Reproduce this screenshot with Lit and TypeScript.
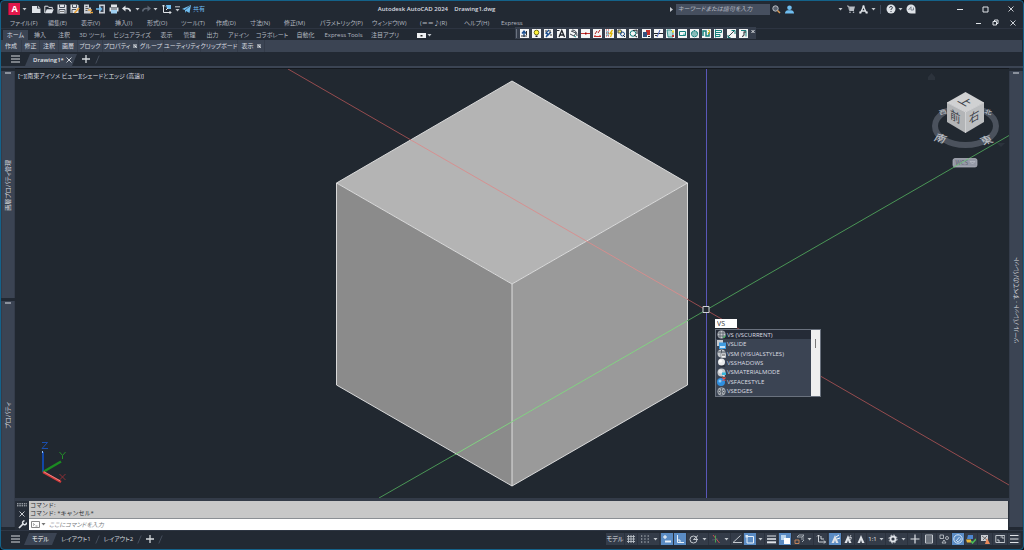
import { LitElement, html, svg, css } from "lit";
import { customElement, state } from "lit/decorators.js";

const base = css`
  * { box-sizing: border-box; }
  button, input, select {
    font: inherit; color: inherit; background: none; border: 0; padding: 0; margin: 0;
    outline: none; border-radius: 0;
  }
  button { display: flex; align-items: center; justify-content: center; white-space: nowrap; }
  svg { display: block; flex: none; }
  a { color: inherit; text-decoration: none; }
`;

const ic = (w: number, h: number, body: unknown) =>
  html`<svg width=${w} height=${h} viewBox="0 0 ${w} ${h}" fill="none" stroke-width="1" aria-hidden="true">${body}</svg>`;
const W = "#dfe3e8";
const B = "#6fbdf0";
const caret = ic(5, 3, svg`<path d="M.5 0h4L2.5 2.5z" fill="#c3c8ce"/>`);
const burger = ic(9, 8, svg`<path d="M0 1h9M0 4h9M0 7h9" stroke="#d6dade"/>`);
const plus = ic(8, 8, svg`<path d="M4 0v8M0 4h8" stroke="#d6dade" stroke-width="1.3"/>`);
const cross = ic(6, 6, svg`<path d="M.5.5l5 5M5.5.5l-5 5" stroke="#c9cdd3"/>`);
const slash = ic(5, 9, svg`<path d="M.8 8.500L4.200.5" stroke="#454e5c"/>`);
const grip = ic(6, 2, svg`<path d="M0 1h6" stroke="#8a919c" stroke-width="2"/>`);
const launcher = ic(4, 4, svg`<path d="M0 0h4v4H0z" fill="#8d949e"/><path d="M1.500 1.500l2 2" stroke="#e5e8eb"/>`);

const quick: Record<string, unknown> = {
  新規: ic(10, 9, svg`<path d="M1 1h5v2.500h3.500V8H1z" fill="${W}"/><path d="M6.800.8l2.400 2H6.800z" fill="${W}"/>`),
  開く: ic(10, 9, svg`<path d="M.8 8V1.200h3l1 1.200h3.500V4" stroke="${W}"/><path d="M1 8.300l1.800-4h7L8 8.300z" fill="${W}"/>`),
  上書き保存: ic(10, 10, svg`<path d="M.5.500h8l1 1v8h-9z" fill="${W}"/><path d="M2.500.5v3h5v-3M2 9.500v-4h6v4" stroke="#4a525e"/><path d="M3 7.500h4" stroke="#777"/>`),
  名前を付けて保存: ic(10, 10, svg`<path d="M.5.500h7l1 1v7.500h-8z" fill="${W}"/><path d="M2.500.5v3h4v-3M2 9V5.500h4" stroke="#4a525e"/><path d="M4.500 9l4.500-5" stroke="#e8a33c" stroke-width="1.800"/>`),
  書き出し: ic(10, 10, svg`<path d="M1 .5h5v3h2v6H1z" fill="#c9cdd3"/><path d="M2.500 2.500h2M2.500 4.500h3M2.500 6.500h2" stroke="#555"/><path d="M5 6h4M7 8.500h3" stroke="#e8a33c" stroke-width="1.500"/>`),
  共有ビュー: ic(10, 10, svg`<path d="M3 .5h6v9H3z" fill="#c9cdd3"/><path d="M4.500 2h3v6h-3z" fill="#3c4554"/><path d="M0 5h5M3.500 3l2 2-2 2" stroke="${B}" stroke-width="1.300"/>`),
  印刷: ic(10, 10, svg`<path d="M2 .5h6V3H2zM.5 3.500h9v4h-9z" fill="${W}"/><path d="M2 6h6v3.500H2z" fill="#9fd0f2"/><path d="M2 5h6" stroke="#4a525e"/>`),
  元に戻す: ic(9, 8, svg`<path d="M0 3.500L3.500.500v6z" fill="${W}"/><path d="M3 3.500h2.500q2.500.2 2.800 3" stroke="${W}" stroke-width="1.600"/>`),
  やり直し: ic(9, 8, svg`<path d="M9 3.500L5.500.500v6z" fill="#5d6674"/><path d="M6 3.500H3.500Q1 3.700.7 6.500" stroke="#5d6674" stroke-width="1.600"/>`),
  ワークスペース: ic(10, 10, svg`<path d="M1.500 1v7.500H9M0 2.500L1.500 1 3 2.500M7.500 7L9 8.500 7.500 10" stroke="${W}"/><path d="M4 1h5v4H5z" fill="${B}"/><path d="M4 6l2-2" stroke="${W}"/>`),
};

@customElement("title-bar")
class TitleBar extends LitElement {
  static styles = [base, css`
    :host { display: grid; grid-template-columns: 5fr auto 7fr; align-items: center; height: 16px; }
    .left, .right { display: flex; align-items: center; min-width: 0; }
    .left { padding-left: 7px; }
    .logo { width: 12px; height: 12px; background: #e2184c; color: #fff; font: bold 9px/12px "Open Sans", sans-serif; border-left: 1px solid #a30f38; }
    .drop { width: 5px; margin: 0 2px; }
    .right .drop { margin: 0 1px; }
    .quick { width: 13px; height: 14px; }
    .narrow { width: 9px; }
    .share { gap: 2px; color: #6fbdf0; }
    .name { color: #d9dce0; font-weight: 600; white-space: pre; }
    .right { justify-content: flex-end; }
    .search { display: flex; align-items: center; gap: 3px; }
    .search input { width: 94px; height: 11px; background: #464f5f; padding: 0 2px; font-style: italic; }
    .search input::placeholder { color: #b6bbc4; opacity: 1; }
    .sm { width: 13px; height: 14px; }
    .gap { width: 41px; }
    .sep { width: 1px; height: 9px; background: #424b5a; margin: 0 3px; }
    .win { width: 25px; height: 14px; }
    .wins { display: flex; margin-left: 31px; }
  `];
  render() {
    const q = (n: string, c = "quick") => html`<button class=${c} aria-label=${n}>${quick[n]}</button>`;
    const drop = html`<button class="drop" aria-label="メニュー">${caret}</button>`;
    return html`
      <div class="left">
        <button class="logo" aria-label="アプリケーション">A</button>${drop}
        ${["新規", "開く", "上書き保存", "名前を付けて保存", "書き出し", "共有ビュー", "印刷", "元に戻す"].map((n) => q(n))}
        ${drop}${q("やり直し", "narrow")}${drop}${q("ワークスペース")}
        <button class="drop" aria-label="カスタマイズ">${ic(5, 6, svg`<path d="M0 .8h5" stroke="#c3c8ce"/><path d="M.5 3h4L2.500 5.500z" fill="#c3c8ce"/>`)}</button>
        <button class="share">${ic(9, 8, svg`<path d="M0 4L9 0 7.500 8 4 6 3 8V5z" fill="${B}"/><path d="M3 5l5-4" stroke="#222933" stroke-width=".6"/>`)}共有</button>
      </div>
      <div class="name">Autodesk AutoCAD 2024    Drawing1.dwg</div>
      <div class="right">
        <label class="search">${ic(3, 5, svg`<path d="M0 0l3 2.500L0 5z" fill="#c3c8ce"/>`)}
          <input aria-label="検索" placeholder="キーワードまたは語句を入力" /></label>
        <button class="sm" aria-label="検索">${ic(9, 9, svg`<circle cx="3.500" cy="3.500" r="2.700" stroke="#b9bec5" fill="#59616d"/><path d="M5.500 5.500L8 8" stroke="#d99a55" stroke-width="1.500"/>`)}</button>
        <button class="sm" aria-label="サインイン">${ic(9, 9, svg`<circle cx="4.500" cy="2.700" r="2.300" fill="${B}"/><path d="M0 8.500q0-3 3-3.300h3q3 .3 3 3.300z" fill="${B}"/>`)}</button>
        <span class="gap"></span>${drop}
        <button class="sm" aria-label="ストア">${ic(8, 8, svg`<path d="M0 1h1.500l1 4.500h4.500" stroke="#b9bec5"/><path d="M2 1.500h6L7 5H2.600z" fill="#b9bec5"/><circle cx="3" cy="7.200" r=".8" fill="#b9bec5"/><circle cx="6.500" cy="7.200" r=".8" fill="#b9bec5"/>`)}</button>
        <button class="sm" aria-label="Autodesk App">${ic(9, 9, svg`<path d="M1.500 8L4.500 1.500 7.500 8M2.500 6h4" stroke="${W}" stroke-width="1.300"/><path d="M3.500.5h2v2h-2zM.3 6.500h2v2h-2zM6.700 6.500h2v2h-2z" fill="${W}"/>`)}</button>
        ${drop}<span class="sep"></span>
        <button class="sm" aria-label="ヘルプ">${ic(10, 10, svg`<circle cx="5" cy="5" r="4.500" fill="${W}"/><path d="M3.500 3.800Q3.600 2.500 5 2.500t1.500 1.300Q6.500 4.600 5 5.200V6M5 7v1" stroke="#39414e"/>`)}</button>
        ${drop}
        <button class="sm" aria-label="フィードバック">${ic(10, 10, svg`<path d="M9.500 9.500V5A4.500 4.500 0 1 0 5 9.500z" fill="${W}"/><path d="M2.500 6L5 2.800V6h2.500V3.500" stroke="#7a828e"/>`)}</button>
        <div class="wins">
          <button class="win" aria-label="最小化">${ic(7, 7, svg`<path d="M0 3.500h6" stroke="${W}"/>`)}</button>
          <button class="win" aria-label="最大化">${ic(7, 7, svg`<path d="M1 1h5v5H1z" stroke="${W}"/>`)}</button>
          <button class="win" aria-label="閉じる">${cross}</button>
        </div>
      </div>`;
  }
}

const menus = ["ファイル(F)", "編集(E)", "表示(V)", "挿入(I)", "形式(O)", "ツール(T)", "作成(D)", "寸法(N)", "修正(M)", "パラメトリック(P)", "ウィンドウ(W)", "(＝＝♪(R)", "ヘルプ(H)", "Express"];

@customElement("menu-row")
class MenuRow extends LitElement {
  static styles = [base, css`
    :host { display: flex; justify-content: space-between; height: 11px; color: #b4b9c1; }
    nav { display: grid; align-items: center; padding-left: 9px;
      grid-template-columns: 38px 33px 34px 32px 34px 35px 34px 34px 36px 52px 48px 44px 37px 24px; }
    nav button { justify-content: flex-start; }
    .doc { display: flex; padding-right: 2px; }
    .doc button { width: 17px; }
  `];
  render() {
    return html`<nav>${menus.map((m) => html`<button>${m}</button>`)}</nav>
      <div class="doc">
        <button aria-label="最小化">${ic(6, 6, svg`<path d="M0 3.500h5" stroke="${W}"/>`)}</button>
        <button aria-label="元のサイズ">${ic(7, 7, svg`<path d="M1 2.500h3.500V6H1zM2.500 2.500V1H6v3.500H4.500" stroke="${W}"/>`)}</button>
        <button aria-label="閉じる">${cross}</button>
      </div>`;
  }
}

const tabs = ["ホーム", "挿入", "注釈", "3D ツール", "ビジュアライズ", "表示", "管理", "出力", "アドイン", "コラボレート", "自動化", "Express Tools", "注目アプリ"];
const panels = ["作成", "修正", "注釈", "画層", "ブロック", "プロパティ", "グループ", "ユーティリティ", "クリップボード", "表示"];
const T = "#16807c";
const K = "#20242b";
const tools: [string, unknown][] = [
  ["上へ", svg`<path d="M4 8V3M2 4.500L4 2l2 2.500" stroke="#1d4f8f" stroke-width="1.400"/><path d="M1 7h6M6.500 2v4" stroke="#333"/>`],
  ["ライト", svg`<circle cx="4.500" cy="3.500" r="2.300" fill="#fff23a" stroke="#777214"/><path d="M3.500 6.500h2v1.500h-2z" fill="${K}"/>`],
  ["切替", svg`<path d="M5 1L2 4l2 1-2 3M3 7l4-4" stroke="#1d4f8f" stroke-width="1.400"/><path d="M6 1v3M1 2h2M6 6h2" stroke="#333"/>`],
  ["文字", svg`<path d="M2 8L4.800 1.500 7.500 8M3 6h3.500" stroke="${K}" stroke-width="1.300"/><path d="M0 1.500h2.500" stroke="${K}"/>`],
  ["回転", svg`<path d="M2 2l5 2-2 3-4-2M3 1q5 0 5 6" stroke="#39434c"/><path d="M5 7l2 1" stroke="${T}"/>`],
  ["線", svg`<path d="M0 4.500h9" stroke="#c4302c"/><path d="M4 3.500h1.500v2H4z" fill="#900"/>`],
  ["寸法", svg`<path d="M1 7.500h7M2 6v2M7 6v2" stroke="#c4302c"/><path d="M2 5l2-3M5 4l2-3" stroke="#a22"/>`],
  ["ハッチ", svg`<path d="M1 2h3v5H1z" fill="#9bc5d4"/><path d="M1 1h4M1 4h4M1 7h4" stroke="#c4302c" stroke-dasharray="1 1"/><path d="M7.500 1L5 4.500h2L5.500 8" stroke="#e0b400" stroke-width="1.300"/>`],
  ["図形", svg`<path d="M1 1h3l1 3H1z" fill="#f2e75a" stroke="#555"/><circle cx="5.500" cy="5" r="2" stroke="#1d4f8f"/><path d="M6 6l2 2" stroke="${K}"/>`],
  ["円", svg`<circle cx="4" cy="4.500" r="2.800" stroke="${T}"/><path d="M4 1.500l4-.5v4M5 6l3 2" stroke="${K}"/>`],
  ["移動", svg`<path d="M1 3h4v5H1z" fill="#34507e"/><path d="M4 1h4v5H5V3H4z" fill="#c4302c"/><path d="M6 7h2v1H6z" fill="${K}"/>`],
  ["トリム", svg`<path d="M0 4.500h9" stroke="${K}"/><path d="M3 8l3-7" stroke="#4b61b8"/><path d="M1 6.500h2" stroke="#333"/>`],
  ["配色", svg`<path d="M1 1h4l2 2v5H2z" fill="#b4dcd9" stroke="${T}" stroke-width=".8"/><path d="M6 1.500h2v2H6z" fill="#ebd829"/><path d="M6 6h2v2H6z" fill="#c4302c"/>`],
  ["矩形", svg`<path d="M1.500 2.500h6v4h-6z" stroke="${T}"/><path d="M5 4.500h2V6H5z" fill="#8cc"/>`],
  ["球", svg`<circle cx="4.500" cy="4.800" r="3" stroke="${T}"/><path d="M1 4h7M2.500 6h4M4.500 1v1.500" stroke="${T}"/>`],
  ["曲線", svg`<path d="M1 7V2h3v5h3V3" stroke="${T}" stroke-width="1.500"/><path d="M6 1l2 1-2 3" stroke="#e0b400"/>`],
  ["整列", svg`<path d="M1.500.5v8M1.500 1.500h6v2h-6M1.500 5.500h4.500v2H1.500" stroke="${T}"/>`],
  ["矢印", svg`<path d="M1 8l6-6" stroke="#3e4650"/><path d="M4.500 1.500h3.500V5" stroke="${T}"/><path d="M1 6v2.500h2.500" stroke="${T}"/>`],
  ["音符", svg`<path d="M2 1.500h5v6" stroke="${T}"/><path d="M5 2.500v4L3 7.500M5 3h2" stroke="${K}"/>`],
];

@customElement("ribbon-area")
class RibbonArea extends LitElement {
  static styles = [base, css`
    :host { display: block; position: relative; color: #b4b9c1; }
    .tabs { display: grid; height: 12px; border-top: 1px solid #2d3441; padding: 1px 0 0 2px;
      grid-template-columns: 25px 24px 24px 33px 46px 23px 23px 23px 29px 38px 29px 47px 36px auto; justify-content: start; }
    .tabs .on { background: #3b4453; color: #d9dce0; }
    .more { gap: 1px; padding-left: 14px; }
    .tabs button, .more { display: flex; align-items: center; }
    .panels { display: grid; height: 12px; background: #3b4453; color: #d9dce0; margin-right: 1px;
      grid-template-columns: 21px 18px 19px 19px 25px 36px 25px 37px 37px 27px; }
    .panels button { border-right: 1px solid #343c4a; gap: 3px; }
    .float { position: absolute; left: 514px; top: -1px; width: 241px; height: 12px; display: flex; align-items: center; justify-content: space-between;
      background: #363e4c; padding: 0 1px; }
    .float button { background: #f4f5f5; width: 9px; height: 9px; }
    .float .x { background: none; width: 4px; align-self: flex-start; }
    .handle { width: 1px; height: 9px; background: #6b7380; }
  `];
  render() {
    return html`
      <div class="tabs" role="tablist">
        ${tabs.map((t, i) => html`<button role="tab" class=${i ? "" : "on"}>${t}</button>`)}
        <button class="more" aria-label="リボン表示">${ic(9, 5, svg`<path d="M0 0h9v5H0z" fill="#eef0f2"/><path d="M3.500 2h2v1.500h-2z" fill="#222"/>`)}${caret}</button>
      </div>
      <div class="panels">
        ${panels.map((p, i) => html`<button>${p}${i === 5 || i === 9 ? launcher : ""}</button>`)}
      </div>
      <div class="float" role="toolbar">
        <span class="handle"></span>
        ${tools.map(([n, b]) => html`<button aria-label=${n}>${ic(9, 9, b)}</button>`)}
        <button class="x" aria-label="閉じる">${ic(4, 5, svg`<path d="M.5 1l3 3M3.500 1l-3 3" stroke="#e5e8eb"/>`)}</button>
      </div>`;
  }
}

@customElement("side-palette")
class SidePalette extends LitElement {
  static properties = { name: {} };
  name = "";
  static styles = [base, css`
    :host { display: flex; flex: 1; flex-direction: column; align-items: center; background: #3b4453; border: 1px solid #343c4a; border-width: 0 1px; padding-top: 1px; }
    .body { flex: 1; display: flex; align-items: center; }
    .text { writing-mode: vertical-rl; text-orientation: sideways; transform: rotate(180deg); color: #d3d7dc; white-space: nowrap; line-height: 10px; }
  `];
  render() { return html`${grip}<div class="body"><span class="text">${this.name}</span></div>`; }
}

const g1 = "#c9cccf";
const ball = svg`<circle cx="4.500" cy="4.500" r="4" fill="#c4c8cc"/>`;
const suggestions: [string, unknown][] = [
  ["VS (VSCURRENT)", svg`${ball}<path d="M1 3h7M1 6h7M3 1v7M6 1v7" stroke="#505862" stroke-width=".8"/><path d="M6 6.500l1 1.500 2-3" stroke="#3fae5a"/>`],
  ["VSLIDE", svg`<path d="M0 0h6v6H0z" fill="${g1}"/><path d="M2 2.500h7V9H2z" fill="#3d9be0"/><path d="M3 6h5v2H3z" fill="#c5e3f8"/>`],
  ["VSM (VISUALSTYLES)", svg`${ball}<path d="M1 3h7M4.500 1v3" stroke="#505862"/><path d="M4 4h5v5H4z" fill="#eef0f2" stroke="#6a727c" stroke-width=".7"/><path d="M5 6h3" stroke="#444"/>`],
  ["VSSHADOWS", svg`<ellipse cx="5.500" cy="8" rx="3" ry="1" fill="#2a303a"/><circle cx="4.500" cy="4" r="3.500" fill="#e8eaec"/><circle cx="3.500" cy="3" r="1.500" fill="#fff"/>`],
  ["VSMATERIALMODE", svg`${ball}<circle cx="3.500" cy="3.500" r="2" fill="#e8eaec"/><path d="M5 4.500h4V7H5z" fill="#35b6dc"/><path d="M7 7v2" stroke="#fff"/>`],
  ["VSFACESTYLE", svg`<circle cx="4" cy="5" r="4" fill="#2f8fe0"/><circle cx="3" cy="4" r="1.500" fill="#8fcaf6"/><path d="M5.500.5l3 3M8.500.5l-3 3" stroke="#f04a3a" stroke-width="1.200"/>`],
  ["VSEDGES", svg`${ball}<path d="M1.500 3l6 3M1.500 6l6-3M4.500 1v7" stroke="#59616b" stroke-width=".9"/><circle cx="4.500" cy="4.500" r="3" stroke="#59616b" stroke-width=".7"/>`],
];

@customElement("model-space")
class ModelSpace extends LitElement {
  @state() text = "VS";
  static styles = [base, css`
    :host { display: block; position: relative; background: #212830; border-top: 1px solid #15191f; min-height: 0; overflow: hidden; }
    .scene { width: 100%; height: 100%; position: absolute; inset: 0; }
    .scene text { font-family: "Noto Sans CJK JP", sans-serif; }
    .label { position: absolute; left: 3px; top: 2px; color: #dcdfe2; line-height: 10px; display: flex; }
    .dyn { position: absolute; left: 700px; top: 250px; width: 106px; }
    .dyn input { display: block; width: 22px; height: 9px; background: #fff; color: #333; padding: 0 2px; font-size: 7px; line-height: 9px; margin-bottom: 1px; }
    .list { display: flex; height: 68px; background: #3b4453; border: 1px solid #6a727e; color: #dcdfe3; }
    ul { flex: 1; margin: 0; padding: 0; list-style: none; display: flex; flex-direction: column; }
    li { flex: 1; display: flex; align-items: center; gap: 1px; padding-left: 1px; min-height: 0; }
    li.on { background: #252b37; }
    .bar { width: 9px; background: #efefef; display: flex; justify-content: center; padding-top: 9px; }
    .thumb { width: 1px; height: 9px; background: #777; }
  `];
  firstUpdated() {
    this.renderRoot.querySelector("input")?.focus();
  }
  render() {
    return html`
      <svg class="scene" viewBox="15 69 994 429" preserveAspectRatio="xMidYMid slice" fill="none">
        <path d="M512 81L687.500 183 512 284 336.500 183z" fill="#b4b4b4"/>
        <path d="M336.500 183L512 284v202L336.500 385z" fill="#8b8b8b"/>
        <path d="M687.500 183L512 284v202l175.500-101z" fill="#9a9a9a"/>
        <path d="M512 81L687.500 183v202L512 486 336.500 385V183zM336.500 183L512 284l175.500-101M512 284v202" stroke="#e6e6e6" stroke-width=".9"/>
        <path d="M288 69L411 140M687 299L1009 485" stroke="#a35052" stroke-width=".9"/>
        <path d="M411 140L687 299" stroke="#d98c8c" stroke-width=".9"/>
        <path d="M379 498L455 454.500M687 321L1009 135.500" stroke="#4fa35a" stroke-width=".9"/>
        <path d="M455 454.500L687 321" stroke="#7fd87f" stroke-width=".9"/>
        <path d="M706.500 69v429" stroke="#5a57b8"/>
        <path d="M703 306.500h6v6h-6z" fill="#212830" stroke="#cfd2d6"/>

        <path d="M43 472V452" stroke="#1246a8" stroke-width="2"/><path d="M42.500 453v-2" stroke="#8fc0ff"/>
        <path d="M43 472L61 461.500" stroke="#1c8a22" stroke-width="2.400"/>
        <path d="M43 472L61 482" stroke="#d23a3a" stroke-width="2.400"/><path d="M44 471.800L60 480.800" stroke="#f7a0a0" stroke-width=".7"/>
        <path d="M42 442.500h5.500L42 448.500h6" stroke="#1a4fb0"/>
        <path d="M59.500 452l3 3.500 3-3.500M62.500 455.500v3.500" stroke="#238f28"/>
        <path d="M59.500 474l6 6M65.500 474l-6 6" stroke="#8e2f35"/>

        <path d="M928 77l3.500-4 3.500 4v3h-7z" fill="#2c333c"/>
        <ellipse cx="965.500" cy="126" rx="30.500" ry="19" stroke="#4b525d" stroke-width="6"/>
        <g fill="#b9bdc2" font-weight="500">
          <text transform="matrix(1 .3 -.5 .8 933 140)" font-size="11">南</text>
          <text transform="matrix(1 -.3 .5 .8 983 145)" font-size="11">東</text>
          <text transform="matrix(1 -.3 .3 .8 940 115)" font-size="7">西</text>
          <text transform="matrix(1 .3 -.3 .8 984 113)" font-size="7">北</text>
        </g>
        <path d="M965.500 92L984 102.500 965.500 112 947 102.500z" fill="#d0d1d2"/>
        <path d="M947 102.500L965.500 112v21L947 122z" fill="#b3b5b7"/>
        <path d="M984 102.500L965.500 112v21L984 122z" fill="#bcbec0"/>
        <path d="M947 102.500L965.500 112 984 102.500M965.500 112v21" stroke="#dfe0e1" stroke-width=".8"/>
        <g fill="#3c434b">
          <text transform="matrix(.87 .5 -.87 .5 957 101)" font-size="11" font-weight="500">上</text>
          <text transform="matrix(.87 .5 0 1 950 118)" font-size="12">前</text>
          <text transform="matrix(.87 -.5 0 1 969 124)" font-size="12">右</text>
        </g>
        <rect x="953" y="158.500" width="24" height="8.500" rx="2" fill="#9599a6" stroke="#b5b8c2" stroke-width=".7"/>
        <text x="955.500" y="165" font-size="6" fill="#5d6370">WCS</text>
        <path d="M970 161.500h5l-2.500 2.500z" stroke="#c3c6ce" stroke-width=".6"/>
        <path d="M954 167L969 158.500" stroke="#6fc07a" stroke-width=".9"/>
        <path d="M997 143h8l-4 4z" fill="#2c333c"/>
      </svg>
      <div class="label"><button>[−]</button><button>[南東アイソメ ビュー]</button><button>[シェードとエッジ (高速)]</button></div>
      <div class="dyn">
        <input aria-label="コマンド入力" .value=${this.text} />
        <div class="list">
          <ul role="listbox">${suggestions.map(([n, b], i) => html`<li role="option" class=${i ? "" : "on"}>${ic(9, 9, b)}${n}</li>`)}</ul>
          <div class="bar"><div class="thumb"></div></div>
        </div>
      </div>`;
  }
}

@customElement("command-line")
class CommandLine extends LitElement {
  static styles = [base, css`
    :host { display: grid; grid-template-columns: 14px 1fr; background: #262d38; border-top: 3px solid #333b48; border-bottom: 1px solid #2f3744; padding-right: 1px; }
    .side { display: flex; flex-direction: column; align-items: center; justify-content: space-between; padding: 2px 0 1px; }
    .log { background: #c8c8c8; color: #2b2f34; padding: 0 1px; height: 18px; border-bottom: 1px solid #8b8f94; line-height: 8px; font-feature-settings: normal; }
    .log p { margin: 0; }
    .line { display: flex; align-items: center; gap: 2px; background: #fff; height: 11px; padding-left: 2px; }
    .line button { gap: 1px; }
    .line input { flex: 1; height: 11px; font-style: italic; color: #333; padding-left: 1px; }
    .line input::placeholder { color: #777b80; opacity: 1; }
  `];
  render() {
    return html`
      <div class="side">
        ${ic(10, 4, svg`<path d="M0 .8h10M0 2.800h10" stroke="#c3c8ce" stroke-dasharray="1.500 .8"/>`)}
        <button aria-label="閉じる">${cross}</button>
        <button aria-label="カスタマイズ">${ic(9, 9, svg`<path d="M1 8l4.500-4.500" stroke="${W}" stroke-width="1.700"/><path d="M8.500 2.500A2 2 0 1 1 6.500.8" stroke="${W}" stroke-width="1.400"/>`)}</button>
      </div>
      <div>
        <div class="log"><p>コマンド:</p><p>コマンド: *キャンセル*</p></div>
        <label class="line">
          <button aria-label="最近使用したコマンド">${ic(9, 7, svg`<path d="M.5.500h8v6h-8z" stroke="#888"/><path d="M2 2.500l1.500 1L2 4.500M4.500 5h2" stroke="#777" stroke-width=".8"/>`)}${ic(5, 3, svg`<path d="M.5 0h4L2.500 2.500z" fill="#777"/>`)}</button>
          <input aria-label="コマンド" placeholder="ここにコマンドを入力" />
        </label>
      </div>`;
  }
}

const man = svg`<path d="M1.500 9L5 1l3.500 8H6L5 6 4 9z" fill="${W}"/>`;
// name, drawing, cell width, highlighted, has drop-down
const cells: [string, unknown, number, boolean, boolean][] = [
  ["グリッド", svg`<path d="M1 2.500h8M1 5h8M1 7.500h8M2.500 1v8M5 1v8M7.500 1v8" stroke="#b9bec5" stroke-width=".9"/>`, 13, false, false],
  ["スナップ", svg`<path d="M1 2h8M1 5h8M1 8h8" stroke="#c3c8ce" stroke-dasharray="1.300 2"/>`, 22, false, true],
  ["ダイナミック入力", svg`<path d="M1 3h4M3 1v4" stroke="#fff"/><path d="M3 6.500h6v2H3z" fill="#e9f1f9"/>`, 14, true, false],
  ["直交モード", svg`<path d="M2.500 1v7.500H9M2.500 6h2.500v2.500" stroke="#e9f1f9"/>`, 13, true, false],
  ["極トラッキング", svg`<circle cx="4.500" cy="5.500" r="3.500" stroke="#c3c8ce"/><path d="M4.500 5.500L9 1.500M4.500 5.500H9" stroke="#c3c8ce"/>`, 22, false, true],
  ["アイソメ作図", svg`<path d="M2 1l6.500 8" stroke="#c1524f"/><path d="M4.500 1.500v7" stroke="#46a556"/><path d="M1 6l6-1" stroke="#667" stroke-width=".6"/>`, 22, false, true],
  ["オブジェクトスナップトラッキング", svg`<path d="M8.500 1.500L1 8.500h9" stroke="#c3c8ce"/>`, 12, false, false],
  ["オブジェクトスナップ", svg`<path d="M2 2.500h6.500V9H2z" stroke="#e9f1f9"/><path d="M.5 1h2.500v2.500H.5z" fill="#dce9f6"/>`, 22, true, true],
  ["線の太さ", svg`<path d="M1 2h9" stroke="${W}"/><path d="M1 5h9" stroke="${W}" stroke-width="1.600"/><path d="M1 8.300h9" stroke="${W}" stroke-width="2"/>`, 13, false, false],
  ["透過性", svg`<path d="M1 1h5v5H1z" fill="#bcd6ee"/><path d="M4 4h6v6H4z" fill="#fff"/>`, 14, true, false],
  ["選択の循環", svg`<path d="M3 3l2-2h5v5L8 8M3 3h5v3M8 3l2-2" stroke="#aeb4bc" stroke-width=".9"/><path d="M1 6h4v3.500H1z" stroke="#d08a5a" stroke-width=".9"/>`, 22, false, true],
  ["UCS", svg`<path d="M2.500 1v7h7M1 2.500L2.500 1 4 2.500M8 6.500L9.500 8 8 9.500M5 2v3h3" stroke="${W}" stroke-width=".9"/>`, 14, false, false],
  ["注釈の表示", svg`${man}<path d="M6 3l3-2M7 5l3-1" stroke="#fff"/>`, 14, true, false],
  ["自動尺度", svg`${man}<path d="M8 1L6.500 3.500h2L7.500 6" stroke="${W}" stroke-width=".8"/>`, 13, false, false],
  ["注釈", man, 12, false, false],
];
const cells2: [string, unknown, number, boolean, boolean][] = [
  ["設定", svg`<circle cx="5" cy="5" r="2.500" stroke="${W}" stroke-width="1.800"/><circle cx="5" cy="5" r="4" stroke="${W}" stroke-dasharray="1.600 1.540"/>`, 22, false, true],
  ["注釈モニター", svg`<path d="M5 .5v9M.5 5h9" stroke="${W}" stroke-width="1.200"/>`, 14, false, false],
  ["クイックプロパティ", svg`<path d="M1.500 1h7v8h-7z" stroke="#c3c8ce"/><path d="M2 3h6M2 5h6M2 7h6" stroke="#c3c8ce" stroke-width=".8"/>`, 15, false, false],
  ["選択フィルター", svg`<path d="M1 1h3.500v3.500H1z" stroke="#b9bec5" stroke-width=".9"/><circle cx="8" cy="4" r="1.500" stroke="#b9bec5" stroke-width=".9"/><path d="M3 9l2-3 2 3z" stroke="#b9bec5" stroke-width=".9"/>`, 15, false, false],
  ["ハードウェア", svg`<circle cx="5" cy="5" r="4.200" stroke="#d5e5f5"/><path d="M3 7l3.500-4" stroke="#d5e5f5"/><path d="M4 7.500a3 3 0 0 0 3.500-3" stroke="#d5e5f5"/>`, 13, true, false],
  ["共有", svg`<path d="M2 1h5v4H1z" fill="#4d86cf"/><path d="M0 5.500h5v3H1z" fill="#e7b63c"/><path d="M5 7l1.500 2L10 5" stroke="#4dbb55" stroke-width="1.500"/>`, 13, false, false],
  ["通知", svg`<path d="M1 1h7v6H1z" fill="#c9cdd3"/><path d="M2 2l5 4M7 2L3 6" stroke="#555" stroke-width=".8"/><path d="M7 4l3 6H5z" fill="#e98a5b"/>`, 15, false, false],
  ["全画面表示", svg`<path d="M.8 1.500h9v7h-9z" stroke="#c3c8ce"/><path d="M5.500 3h2.500v2M3 5v2h2" stroke="#c3c8ce"/>`, 15, false, false],
  ["カスタマイズ", svg`<path d="M1 1.500h8.500M1 5h8.500M1 8.500h8.500" stroke="${W}"/>`, 13, false, false],
];

@customElement("status-bar")
class StatusBar extends LitElement {
  static styles = [base, css`
    :host { display: flex; justify-content: space-between; align-items: center; height: 18px; color: #d3d7dc; padding-bottom: 2px; }
    .tabs, .icons { display: flex; align-items: center; }
    .tabs { padding-left: 10px; gap: 4px; }
    .on { height: 12px; background: #3b4453; color: #fff; width: 33px; clip-path: polygon(5px 0, 100% 0, calc(100% - 5px) 100%, 0 100%); }
    .icons { padding-right: 2px; }
    .cell { height: 12px; background: #343c49; border-right: 1px solid #2b323e; gap: 2px; }
    .mark { display: flex; align-items: center; justify-content: center; height: 12px; width: 12px; }
    .lit .mark { background: #5b8cc4; }
    .word { width: 19px; color: #e2e5e8; }
  `];
  render() {
    const cell = ([n, b, w, on, d]: (typeof cells)[number]) =>
      html`<button class="cell ${on ? "lit" : ""}" style="width:${w}px" aria-label=${n}><span class="mark">${ic(10, 10, b)}</span>${d ? caret : ""}</button>`;
    return html`
      <div class="tabs">
        <button aria-label="レイアウト">${burger}</button>
        <button class="on">モデル</button>
        <button>レイアウト1</button>${slash}<button>レイアウト2</button>${slash}
        <button aria-label="新規レイアウト">${plus}</button>${slash}
      </div>
      <div class="icons">
        <button class="cell word">モデル</button>
        ${cells.map(cell)}
        <button class="cell word">1:1${caret}</button>
        ${cells2.map(cell)}
      </div>`;
  }
}

@customElement("app-root")
class AppRoot extends LitElement {
  static styles = [base, css`
    :host { display: block; height: 100vh; background: #0a1016; }
    .frame { height: 100%; display: flex; flex-direction: column; background: #222933; border: 1px solid #14628a; border-radius: 4px; overflow: hidden;
      font: 6px/8px "Open Sans", "Noto Sans CJK JP", sans-serif; font-feature-settings: "palt"; }
    .docs { display: flex; align-items: center; height: 14px; padding-left: 10px; gap: 5px; color: #e2e5e8; }
    .doc { display: flex; align-items: center; justify-content: space-between; height: 12px; width: 52px; background: #3b4453; padding: 0 5px 0 8px;
      clip-path: polygon(5px 0, 100% 0, calc(100% - 5px) 100%, 0 100%); font-weight: 600; align-self: flex-end; }
    .work { flex: 1; min-height: 0; display: grid; grid-template-columns: 14px 1fr 14px; border-top: 2px solid #3b4453; }
    .col { display: flex; flex-direction: column; gap: 3px; padding: 3px 0; border-bottom: 1px solid #2f3744; }
    .main { min-width: 0; display: grid; grid-template-rows: 1fr auto; }
  `];
  render() {
    return html`
      <div class="frame">
        <title-bar></title-bar>
        <menu-row></menu-row>
        <ribbon-area></ribbon-area>
        <div class="docs">
          <button aria-label="ファイルタブ">${burger}</button>
          <div class="doc">Drawing1*<button aria-label="閉じる">${cross}</button></div>
          <button aria-label="新規図面">${plus}</button>${slash}
        </div>
        <div class="work">
          <div class="col"><side-palette .name=${"画層プロパティ管理"}></side-palette><side-palette .name=${"プロパティ"}></side-palette></div>
          <div class="main"><model-space></model-space><command-line></command-line></div>
          <div class="col"><side-palette .name=${"ツール パレット - すべてのパレット"}></side-palette></div>
        </div>
        <status-bar></status-bar>
      </div>`;
  }
}
